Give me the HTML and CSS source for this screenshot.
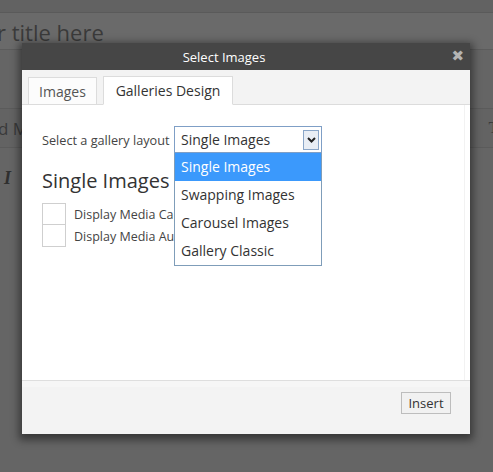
FILE: index.html
```html
<!DOCTYPE html>
<html>
<head>
<meta charset="utf-8">
<link rel="stylesheet" href="styles.css">
</head>
<body>
<div class="page">
  <div class="topstrip"></div>
  <div class="title-input"><span class="title-text">r title here</span></div>
  <div class="spacer"></div>
  <div class="toolbar"><span class="tb-left">d M</span><span class="tb-right">T</span></div>
  <div class="format-row"><span class="italic-i">I</span></div>
</div>

<div class="modal">
  <div class="modal-title">Select Images<span class="close">&#10006;</span></div>
  <div class="tabs">
    <div class="tab">Images</div>
    <div class="tab active">Galleries Design</div>
  </div>
  <div class="modal-body">
    <div class="layout-row">
      <span class="layout-label">Select a gallery layout</span>
      <div class="select-wrap">
        <div class="select">
          <span>Single Images</span>
          <span class="arrow"><svg width="9" height="6" viewBox="0 0 9 6"><path d="M1 1 L4.5 4.5 L8 1" fill="none" stroke="#222" stroke-width="2"/></svg></span>
        </div>
        <ul class="options">
          <li class="sel">Single Images</li>
          <li>Swapping Images</li>
          <li>Carousel Images</li>
          <li>Gallery Classic</li>
        </ul>
      </div>
    </div>
    <h2 class="heading">Single Images</h2>
    <div class="check-row"><span class="box"></span><span class="check-label">Display Media Caption</span></div>
    <div class="check-row"><span class="box"></span><span class="check-label">Display Media Author</span></div>
  </div>
  <div class="modal-footer">
    <button class="insert">Insert</button>
  </div>
</div>
</body>
</html>
```
FILE: styles.css
```css
html, body {
  margin: 0;
  padding: 0;
}
body {
  width: 493px;
  height: 472px;
  background: #656565;
  font-family: "Open Sans", "Noto Sans", sans-serif;
  overflow: hidden;
  position: relative;
}
.page {
  display: flex;
  flex-direction: column;
}
.topstrip {
  height: 12px;
  border-bottom: 1px solid #5a5a5a;
  background: #626262;
}
.title-input {
  height: 36px;
  background: #6a6a6a;
  border-bottom: 1px solid #5c5c5c;
  display: flex;
  align-items: center;
  overflow: hidden;
}
.title-text {
  font-size: 22px;
  color: #3a3a3a;
  margin-left: -3px;
  line-height: 1;
  margin-top: 2px;
}
.spacer {
  height: 58px;
}
.toolbar {
  height: 38px;
  border-top: 1px solid #5b5b5b;
  border-bottom: 1px solid #5b5b5b;
  background: #636363;
  display: flex;
  align-items: center;
  justify-content: space-between;
  font-size: 17px;
  color: #3a3a3a;
}
.tb-left { margin-left: -2px; }
.tb-right { margin-right: -6px; font-family: "Liberation Serif", serif; }
.format-row {
  height: 60px;
  display: flex;
  align-items: center;
  padding-left: 4px;
}
.italic-i {
  font-family: "Liberation Serif", serif;
  font-style: italic;
  font-weight: bold;
  font-size: 18px;
  color: #2f2f2f;
}

.modal {
  position: absolute;
  left: 22px;
  top: 43px;
  width: 448px;
  height: 391px;
  background: #fff;
  box-shadow: 0 3px 8px 3px rgba(0,0,0,0.45);
  display: flex;
  flex-direction: column;
}
.modal-title {
  height: 27px;
  background: #464646;
  color: #fff;
  font-size: 13px;
  display: flex;
  align-items: center;
  justify-content: center;
  padding-right: 44px;
  position: relative;
}
.close {
  position: absolute;
  right: 6px;
  top: 4px;
  font-size: 15px;
  color: #b4b4b4;
  font-family: "DejaVu Sans", sans-serif;
  font-weight: bold;
}
.tabs {
  height: 34px;
  background: #f3f3f3;
  border-bottom: 1px solid #dcdcdc;
  display: flex;
  align-items: flex-end;
  padding-left: 6px;
  gap: 6px;
}
.tab {
  height: 27px;
  box-sizing: border-box;
  border: 1px solid #dcdcdc;
  border-bottom: none;
  background: #fcfcfc;
  font-size: 14px;
  color: #555;
  padding: 0 10px;
  display: flex;
  align-items: center;
  margin-bottom: 0;
}
.tab:first-child {
  width: 69px;
  justify-content: center;
  padding: 0;
}
.tab.active {
  background: #fff;
  color: #333;
  height: 29px;
  margin-bottom: -1px;
  border-bottom: 1px solid #fff;
  width: 130px;
  justify-content: center;
  padding: 0;
}
.modal-body {
  flex: 1;
  padding: 21px 20px 0 20px;
  border-right: 1px solid #f2f2f2;
  margin-right: 5px;
}
.layout-row {
  display: flex;
  align-items: center;
  height: 27px;
  position: relative;
  z-index: 2;
}
.layout-label {
  font-size: 12.7px;
  color: #444;
  width: 132px;
}
.select-wrap {
  position: relative;
}
.select {
  width: 148px;
  height: 27px;
  box-sizing: border-box;
  border: 1px solid #7f9fc6;
  background: #fff;
  display: flex;
  align-items: center;
  justify-content: space-between;
  padding-left: 6px;
  padding-right: 2px;
  font-size: 14px;
  color: #333;
}
.arrow {
  width: 16px;
  height: 20px;
  box-sizing: border-box;
  border: 1px solid #8aa6c8;
  background: #e9eef5;
  display: flex;
  align-items: center;
  justify-content: center;
}
.options {
  position: absolute;
  left: 0;
  top: 27px;
  width: 148px;
  box-sizing: border-box;
  margin: 0;
  padding: 0;
  list-style: none;
  background: #fff;
  border: 1px solid #7f9db9;
  border-top: none;
}
.options li {
  height: 28px;
  line-height: 28px;
  padding-left: 6px;
  font-size: 14px;
  color: #333;
}
.options li.sel {
  background: #3b99fc;
  color: #fff;
}
.heading {
  margin: 14px 0 8px 0;
  font-size: 20px;
  font-weight: normal;
  color: #333;
  line-height: 28px;
}
.check-row {
  display: flex;
  align-items: center;
  height: 22px;
}
.box {
  width: 24px;
  height: 23px;
  box-sizing: border-box;
  border: 1px solid #cfcfcf;
  background: #fff;
  margin-right: 8px;
}
.check-row + .check-row .box {
  margin-top: -1px;
}
.check-label {
  font-size: 12.5px;
  color: #444;
  white-space: nowrap;
}
.modal-footer {
  height: 54px;
  background: #f3f3f3;
  border-top: 1px solid #dedede;
  box-shadow: inset 0 6px 0 #f6f6f6;
  display: flex;
  justify-content: flex-end;
  align-items: flex-start;
  padding: 11px 19px 0 0;
  box-sizing: border-box;
}
.insert {
  height: 22px;
  width: 50px;
  font-family: "Open Sans", sans-serif;
  font-size: 13px;
  color: #333;
  background: #f1f1f1;
  border: 1px solid #bdbdbd;
  padding: 0;
}
```
